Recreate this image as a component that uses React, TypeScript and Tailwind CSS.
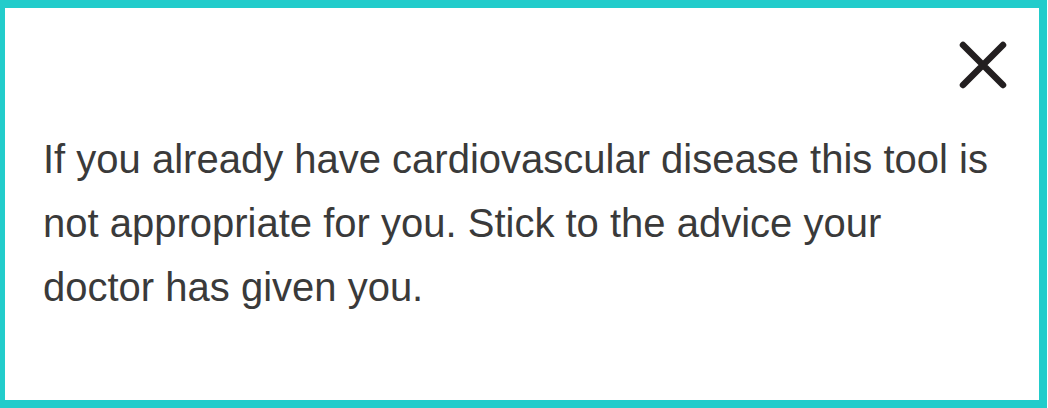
import React from "react";

// Advisory notice panel with a close control in its top-right corner.
export default function App() {
  return (
    <div className="w-[1048px] h-[408px] bg-white">
      <div className="w-[1047px] h-[408px] border-t-8 border-b-8 border-r-8 border-l-[5px] border-[#22cccb] bg-white pl-[38px] pr-[32px] pt-[33px]">
        <div className="flex justify-end">
          <button
            type="button"
            aria-label="Close"
            className="w-[48px] h-[48px] flex items-center justify-center"
          >
            <svg width="48" height="48" viewBox="0 0 48 48" fill="none">
              <path
                d="M4 4 L44 44 M44 4 L4 44"
                stroke="#231f20"
                strokeWidth="6.5"
                strokeLinecap="round"
              />
            </svg>
          </button>
        </div>
        <p className="mt-[38px] pr-[12px] text-[40px] leading-[64px] text-[#3a3a3a] font-['Liberation_Sans',Arial,sans-serif]">
          If you already have cardiovascular disease this tool is not appropriate for you. Stick to the advice your doctor has given you.
        </p>
      </div>
    </div>
  );
}
